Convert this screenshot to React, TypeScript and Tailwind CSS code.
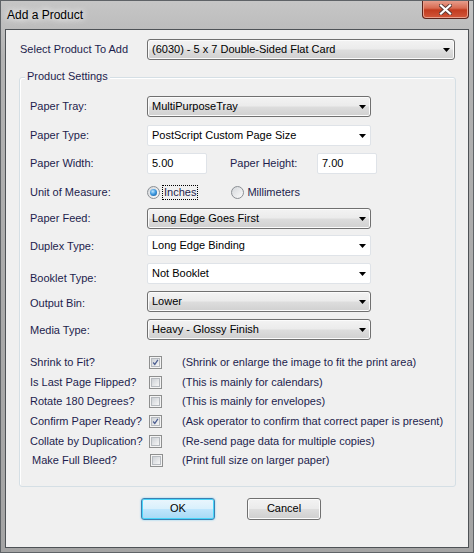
import React from 'react';

const font = "font-['Liberation_Sans',Arial,sans-serif]";
const labelText = 'text-[11px] leading-[13px] text-[#1d1d4d] whitespace-nowrap';

const Arrow: React.FC = () => (
  <svg width="7" height="4" viewBox="0 0 7 4" className="shrink-0">
    <path d="M0 0h7L3.5 4z" fill="#000" />
  </svg>
);

// Read-only (drop-down list) combo: grey button look
const ListCombo: React.FC<{ value: string; className: string }> = ({ value, className }) => (
  <div
    className={`${className} flex h-[21px] items-center justify-between rounded-[3px] border border-[#707070] bg-[linear-gradient(to_bottom,#f3f3f3,#ebebeb_48%,#dddddd_52%,#d0d0d0)] pl-[4px] pr-[4px] shadow-[inset_0_0_0_1px_#fbfbfb]`}
  >
    <span className="text-[11px] text-black whitespace-nowrap">{value}</span>
    <Arrow />
  </div>
);

// Editable combo: white field with a pale border
const EditCombo: React.FC<{ value: string; className: string }> = ({ value, className }) => (
  <div
    className={`${className} flex h-[21px] items-center justify-between rounded-[2px] border border-[#dfe3e8] bg-white pl-[4px] pr-[4px]`}
  >
    <span className="text-[11px] text-black whitespace-nowrap">{value}</span>
    <Arrow />
  </div>
);

const TextBox: React.FC<{ value: string }> = ({ value }) => (
  <div className="flex h-[21px] w-[60px] items-center rounded-[2px] border border-[#dfe3e8] bg-white pl-[4px]">
    <span className="text-[11px] text-black">{value}</span>
  </div>
);

const Radio: React.FC<{ checked?: boolean }> = ({ checked }) => (
  <div className="flex h-[13px] w-[13px] shrink-0 items-center justify-center rounded-full border border-[#8b8f94] bg-[linear-gradient(to_bottom_right,#d4d7db,#fbfbfb)]">
    {checked && (
      <div className="h-[7px] w-[7px] rounded-full bg-[radial-gradient(circle_at_40%_35%,#bfe6ff_0%,#3f9ae0_45%,#0b4f92_100%)]" />
    )}
  </div>
);

const Check: React.FC<{ checked?: boolean }> = ({ checked }) => (
  <div className="flex h-[13px] w-[13px] shrink-0 items-center justify-center border border-[#8e8f8f] bg-[#f4f4f4]">
    <div className="flex h-[9px] w-[9px] items-center justify-center border border-[#b6babf] bg-[linear-gradient(to_bottom_right,#cdd1d6,#f6f6f6)]">
      {checked && (
        <svg width="9" height="9" viewBox="0 0 9 9">
          <path d="M1.5 4.5 L3.6 7 L7.6 1.2" fill="none" stroke="#4d5f92" strokeWidth="1.6" />
        </svg>
      )}
    </div>
  </div>
);

const options = [
  { label: 'Shrink to Fit?', checked: true, note: '(Shrink or enlarge the image to fit the print area)' },
  { label: 'Is Last Page Flipped?', checked: false, note: '(This is mainly for calendars)' },
  { label: 'Rotate 180 Degrees?', checked: false, note: '(This is mainly for envelopes)' },
  { label: 'Confirm Paper Ready?', checked: true, note: '(Ask operator to confirm that correct paper is present)' },
  { label: 'Collate by Duplication?', checked: false, note: '(Re-send page data for multiple copies)' },
];

const App: React.FC = () => {
  return (
    <div
      className={`${font} relative h-[553px] w-[474px] overflow-hidden border border-[#5f6367] bg-[linear-gradient(to_bottom,#c6c6c6,#b3b3b3_10%,#a9a9a9_60%,#a4a4a4)] pl-[4px]`}
    >
      {/* title bar */}
      <div className="flex h-[28px] items-center pl-[2px]">
        <span className="text-[12px] text-black [text-shadow:0_0_6px_#fff,0_0_10px_#fff]">Add a Product</span>
      </div>
      <div className="absolute right-[4px] top-[-1px] flex h-[19px] w-[47px] items-center justify-center rounded-b-[4px] border border-t-0 border-[#5b241c] bg-[linear-gradient(to_bottom,#e9a493,#d86b52_45%,#c23b1f_55%,#d2573a)] shadow-[inset_0_0_0_1px_#e9a08c]">
        <svg width="13" height="11" viewBox="0 0 13 11">
          <path d="M2 1.5 L11 9.5 M11 1.5 L2 9.5" stroke="#5d3a35" strokeWidth="4" strokeLinecap="square" />
          <path d="M2 1.5 L11 9.5 M11 1.5 L2 9.5" stroke="#fff" strokeWidth="2.2" strokeLinecap="square" />
        </svg>
      </div>

      {/* client area */}
      <div className="h-[519px] w-[464px] border border-[#4e5256] bg-[#f0f0f0]">
        <div className="mt-[9px] flex h-[21px] items-center">
          <div className={`${labelText} w-[141px] pl-[14px]`}>Select Product To Add</div>
          <ListCombo value="(6030) - 5 x 7 Double-Sided Flat Card" className="w-[308px]" />
        </div>

        <div className="relative ml-[13px] mt-[17px] w-[437px] rounded-[3px] border border-[#d5dfe5] pb-[15px] pl-[10px] shadow-[inset_1px_1px_0_#fff]">
          <div className={`${labelText} absolute -top-[8px] left-[5px] bg-[#f0f0f0] px-[2px]`}>Product Settings</div>

          <div className="mt-[18px] flex h-[21px] items-center">
            <div className={`${labelText} w-[117px]`}>Paper Tray:</div>
            <ListCombo value="MultiPurposeTray" className="w-[224px]" />
          </div>
          <div className="mt-[8px] flex h-[21px] items-center">
            <div className={`${labelText} w-[117px]`}>Paper Type:</div>
            <EditCombo value="PostScript Custom Page Size" className="w-[224px]" />
          </div>
          <div className="mt-[7px] flex h-[21px] items-center">
            <div className={`${labelText} w-[117px]`}>Paper Width:</div>
            <TextBox value="5.00" />
            <div className={`${labelText} ml-[23px] w-[87px]`}>Paper Height:</div>
            <TextBox value="7.00" />
          </div>
          <div className="mt-[10px] flex h-[16px] items-center">
            <div className={`${labelText} w-[117px]`}>Unit of Measure:</div>
            <Radio checked />
            <span className={`${labelText} ml-[2px] border border-dotted border-black px-[1px]`}>Inches</span>
            <div className="ml-[33px]">
              <Radio />
            </div>
            <span className={`${labelText} ml-[3px]`}>Millimeters</span>
          </div>
          <div className="mt-[8px] flex h-[21px] items-center">
            <div className={`${labelText} w-[117px]`}>Paper Feed:</div>
            <ListCombo value="Long Edge Goes First" className="w-[224px]" />
          </div>
          <div className="mt-[6px] flex h-[21px] items-center">
            <div className={`${labelText} w-[117px] pt-[2px]`}>Duplex Type:</div>
            <EditCombo value="Long Edge Binding" className="w-[224px]" />
          </div>
          <div className="mt-[7px] flex h-[21px] items-center">
            <div className={`${labelText} w-[117px] pt-[9px]`}>Booklet Type:</div>
            <EditCombo value="Not Booklet" className="w-[224px]" />
          </div>
          <div className="mt-[7px] flex h-[21px] items-center">
            <div className={`${labelText} w-[117px] pt-[3px]`}>Output Bin:</div>
            <ListCombo value="Lower" className="w-[224px]" />
          </div>
          <div className="mt-[7px] flex h-[21px] items-center">
            <div className={`${labelText} w-[117px] pt-[1px]`}>Media Type:</div>
            <ListCombo value="Heavy - Glossy Finish" className="w-[224px]" />
          </div>

          <div className="mt-[13px]">
            {options.map((o) => (
              <div key={o.label} className="flex h-[19.6px] items-center">
                <div className={`${labelText} w-[119px]`}>{o.label}</div>
                <Check checked={o.checked} />
                <div className={`${labelText} ml-[20px]`}>{o.note}</div>
              </div>
            ))}
            <div className="flex h-[19.6px] items-center">
              <div className={`${labelText} w-[120px] pl-[2px]`}>Make Full Bleed?</div>
              <Check />
              <div className={`${labelText} ml-[19px]`}>(Print full size on larger paper)</div>
            </div>
          </div>
        </div>

        <div className="mt-[11px] flex pl-[135px]">
          <button className="flex h-[22px] w-[74px] items-center justify-center rounded-[3px] border border-[#3c7fb1] bg-[linear-gradient(to_bottom,#eaf6fd,#d9f0fc_48%,#bee6fd_52%,#a7d9f5)] text-[11px] text-black shadow-[inset_0_0_0_1px_#48d6fb,0_0_2px_#6ec9f2]">
            OK
          </button>
          <button className="ml-[32px] flex h-[22px] w-[74px] items-center justify-center rounded-[3px] border border-[#707070] bg-[linear-gradient(to_bottom,#f3f3f3,#ebebeb_48%,#dddddd_52%,#cfcfcf)] text-[11px] text-black shadow-[inset_0_0_0_1px_#fcfcfc]">
            Cancel
          </button>
        </div>
      </div>
    </div>
  );
};

export default App;
